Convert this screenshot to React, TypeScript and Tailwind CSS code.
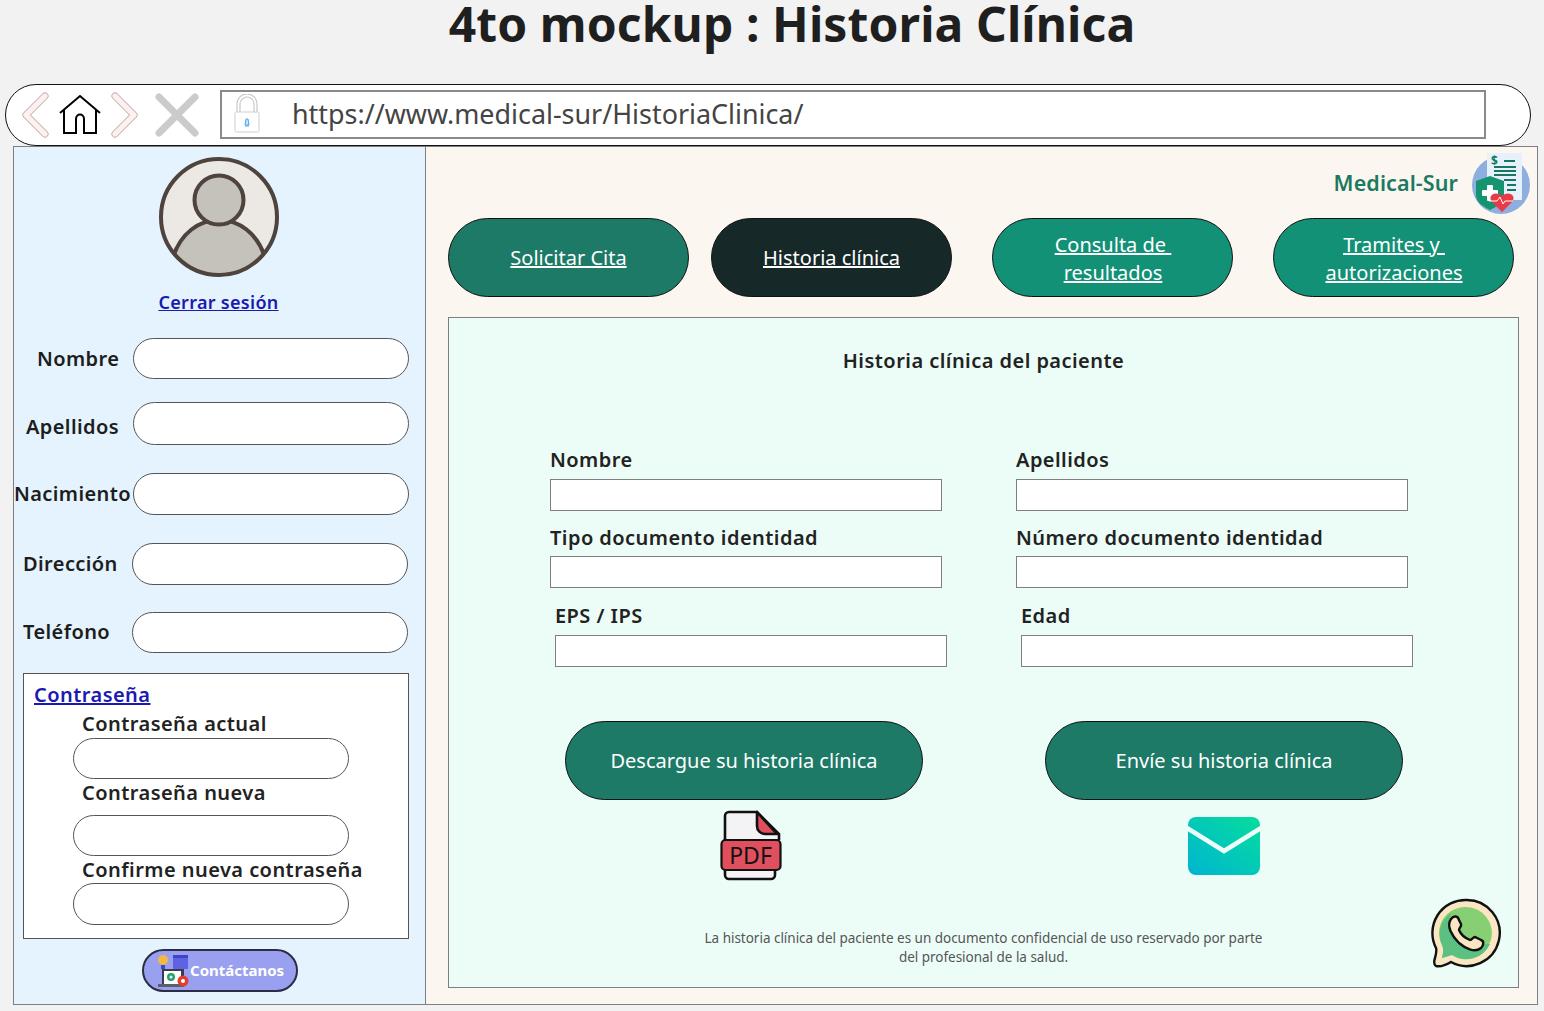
import type { ReactNode } from "react";

const font = { fontFamily: '"Noto Sans", "Open Sans", sans-serif' };

function Pill({ className = "" }: { className?: string }) {
  return <div className={`rounded-full border border-[#555] bg-white ${className}`} />;
}

function Field({ label, labelClass, inputClass }: { label: string; labelClass: string; inputClass: string }) {
  return (
    <div className="flex items-center">
      <span className={`text-[20px] leading-none font-semibold tracking-[0.4px] text-[#1d1d1d] whitespace-nowrap ${labelClass}`}>{label}</span>
      <Pill className={inputClass} />
    </div>
  );
}

function NavButton({ children, color }: { children: ReactNode; color: string }) {
  return (
    <a className={`flex h-[79px] w-[241px] items-center justify-center rounded-[40px] border border-[#111] text-center text-[20px] leading-[28px] whitespace-pre text-white underline ${color}`}>
      <span>{children}</span>
    </a>
  );
}

function FormField({ label, gap = "mt-[6px]" }: { label: string; gap?: string }) {
  return (
    <div className="w-[392px]">
      <div className="h-[24px] text-[20px] leading-[24px] font-semibold tracking-[0.45px] text-[#222]">{label}</div>
      <div className={`h-[32px] border border-[#7f7f7f] bg-white ${gap}`} />
    </div>
  );
}

function Avatar() {
  return (
    <svg width="120" height="120" viewBox="0 0 120 120">
      <defs>
        <clipPath id="c"><circle cx="60" cy="60" r="57" /></clipPath>
      </defs>
      <circle cx="60" cy="60" r="58" fill="#ece9e4" />
      <g clipPath="url(#c)">
        <path d="M14 100C22 76 40 63 60 63s38 13 46 37v22H14z" fill="#c5c1bb" stroke="#4e433d" strokeWidth="4" />
      </g>
      <circle cx="60" cy="43" r="24.5" fill="#c5c1bb" stroke="#4e433d" strokeWidth="4" />
      <circle cx="60" cy="60" r="58" fill="none" stroke="#4e433d" strokeWidth="4" />
    </svg>
  );
}

function BrowserIcons() {
  return (
    <div className="flex items-center">
      <svg width="32" height="46" viewBox="0 0 32 46" className="ml-[12px]">
        <path d="M27 4 8 23l19 19" fill="none" stroke="#b9a7a3" strokeWidth="7" strokeLinecap="round" strokeLinejoin="round" />
        <path d="M27 4 8 23l19 19" fill="none" stroke="#fdf1ef" strokeWidth="5.4" strokeLinecap="round" strokeLinejoin="round" />
      </svg>
      <svg width="44" height="42" viewBox="0 0 44 42" className="ml-[8px]" fill="none" stroke="#000" strokeWidth="2">
        <path d="M2 19 22 2l20 17" />
        <path d="M6 16v23h12V25c0-6 8-6 8 0v14h12V16" />
      </svg>
      <svg width="32" height="46" viewBox="0 0 32 46" className="ml-[8px]">
        <path d="M5 4l19 19L5 42" fill="none" stroke="#b9a7a3" strokeWidth="7" strokeLinecap="round" strokeLinejoin="round" />
        <path d="M5 4l19 19L5 42" fill="none" stroke="#fdf1ef" strokeWidth="5.4" strokeLinecap="round" strokeLinejoin="round" />
      </svg>
      <svg width="44" height="44" viewBox="0 0 44 44" className="ml-[13px]">
        <path d="M4 4l36 36M40 4 4 40" stroke="#cbcbcb" strokeWidth="7" strokeLinecap="round" />
      </svg>
    </div>
  );
}

function Lock() {
  return (
    <svg width="28" height="40" viewBox="0 0 28 40">
      <path d="M4 18V10a10 10 0 0 1 20 0v8M7 18v-8a7 7 0 0 1 14 0v8" fill="none" stroke="#c9c9c9" strokeWidth="1.2" />
      <rect x="2" y="18" width="24" height="20" rx="1.5" fill="#fff" stroke="#cfcfcf" />
      <path d="M13 25h2l1 6h-4zM12 32h4" fill="#cfe7fa" stroke="#45a5ec" strokeWidth="1" />
    </svg>
  );
}

function MedicalLogo() {
  return (
    <svg width="60" height="62" viewBox="0 0 60 62">
      <circle cx="30" cy="33" r="29" fill="#8eaee0" />
      <rect x="16" y="1" width="35" height="47" fill="#e6f1fb" />
      <path d="M33 9h11M23 15h22M23 19h22M23 23h22M33 28h12M36 33h9M36 38h9" stroke="#17785f" strokeWidth="2" />
      <text x="20" y="13" fontSize="12" fontWeight="700" fill="#17785f" style={font}>$</text>
      <path d="M19 24 33 29v14c0 7-6 11-14 15C11 54 5 50 5 43V29z" fill="#14956f" />
      <rect x="16" y="33" width="6" height="16" rx="1" fill="#fff" />
      <rect x="11" y="38" width="16" height="6" rx="1" fill="#fff" />
      <path d="M31 60 21 50c-5-6 3-12 10-6 7-6 15 0 10 6z" fill="#e93a45" />
      <path d="M18 49h8l3-4 3 7 2-3h8" fill="none" stroke="#fff" strokeWidth="1" />
    </svg>
  );
}

function ContactIcon() {
  return (
    <svg width="36" height="36" viewBox="0 0 36 36">
      <circle cx="7" cy="7" r="5" fill="#f4b942" />
      <rect x="5" y="12" width="4" height="4" fill="#3d46c8" />
      <rect x="17" y="2" width="15" height="14" rx="1" fill="#5e63e6" />
      <path d="M17 2h15v3H17z" fill="#3d46c8" />
      <rect x="6" y="16" width="22" height="16" fill="#3b3b4d" />
      <rect x="8" y="18" width="17" height="13" fill="#fff" />
      <rect x="2" y="31" width="26" height="3" fill="#5b6064" />
      <circle cx="15" cy="24" r="4" fill="#26a269" />
      <circle cx="15" cy="24" r="1.5" fill="#fff" />
      <circle cx="27" cy="28" r="5.5" fill="#e0402f" />
      <circle cx="27" cy="28" r="2" fill="#fff" />
    </svg>
  );
}

function PdfIcon() {
  return (
    <svg width="62" height="72" viewBox="0 0 62 72">
      <path d="M5 30V6a4 4 0 0 1 4-4h28l22 22v6M5 56v9a4 4 0 0 0 4 4h42a4 4 0 0 0 4-4v-9" fill="#f3f3f6" stroke="#111" strokeWidth="2.6" />
      <path d="M37 2v14a8 8 0 0 0 8 8h12z" fill="#df4f5e" stroke="#111" strokeWidth="2.6" strokeLinejoin="round" />
      <rect x="1.5" y="30" width="59" height="30" rx="4" fill="#df4f5e" stroke="#111" strokeWidth="2.2" />
      <text x="30.5" y="53.5" textAnchor="middle" fontSize="23" fill="#111" style={font}>PDF</text>
    </svg>
  );
}

function MailIcon() {
  return (
    <svg width="74" height="60" viewBox="0 0 74 60">
      <defs>
        <linearGradient id="m" x1="0" y1="1" x2="1" y2="0">
          <stop offset="0" stopColor="#00b5d1" />
          <stop offset="1" stopColor="#05dd9c" />
        </linearGradient>
      </defs>
      <rect x="1" y="1" width="72" height="58" rx="8" fill="url(#m)" />
      <path d="M0 12 37 35 74 12" fill="none" stroke="#edfdf8" strokeWidth="4.5" />
    </svg>
  );
}

function WhatsappIcon() {
  return (
    <svg width="72" height="72" viewBox="0 0 72 72">
      <path d="M36 2a33 33 0 1 1-15 62c-5 3-11 5-15 4-3-2-2-5-1-8 1-4 2-7 1-10A33 33 0 0 1 36 2z" fill="#fbe6c3" stroke="#111" strokeWidth="2.4" />
      <path d="M36 9a26 26 0 1 1-14 48l-10 3c1-5 2-9 0-13A26 26 0 0 1 36 9z" fill="#86cf72" />
      <path d="M12 47A26 26 0 0 1 21 15c-6 14 3 33 39 31a26 26 0 0 1-38 11l-10 3c1-5 2-9 0-13z" fill="#5cc080" />
      <path d="M21 21c3-4 7-3 8 1l2 4c1 2-2 4-2 6 2 5 6 8 11 10 2 0 3-3 5-3l6 3c3 1 3 5 0 8-6 5-15 1-22-5-7-7-13-17-8-24z" fill="#fbe6c3" stroke="#111" strokeWidth="2.4" />
    </svg>
  );
}

export default function App() {
  return (
    <div className="relative h-[1011px] w-[1544px] overflow-hidden bg-[#f2f2f2]" style={font}>
      <h1 className="h-[84px] pl-[40px] text-center text-[48px] leading-[47px] font-bold tracking-[0.1px] text-[#1f1f1f]">4to mockup : Historia Clínica</h1>

      <div className="ml-[5px] flex h-[62px] w-[1526px] items-center rounded-[32px] border border-[#111] bg-white">
        <BrowserIcons />
        <div className="mb-[2px] ml-[21px] flex h-[49px] w-[1266px] items-center border-2 border-[#8a8a8a] pl-[11px]">
          <Lock />
          <span className="ml-[31px] text-[26.9px] leading-none text-[#444]">https://www.medical-sur/HistoriaClinica/</span>
        </div>
      </div>

      <div className="ml-[13px] flex h-[859px] w-[1525px] border border-[#7f7f7f] bg-[#fbf6ef]">
        <aside className="flex h-full w-[412px] shrink-0 flex-col border-r border-[#7f7f7f] bg-[#e4f3fd]">
          <div className="mt-[10px] flex justify-center pr-[2px]"><Avatar /></div>
          <a className="mt-[12px] pr-[2px] text-center text-[18px] leading-[26px] font-semibold tracking-[0.3px] text-[#1a1ab0] underline">Cerrar sesión</a>

          <div className="mt-[23px]"><Field label="Nombre" labelClass="w-[119px] pl-[23px]" inputClass="h-[41px] w-[276px]" /></div>
          <div className="mt-[23px]"><Field label="Apellidos" labelClass="mt-[6px] w-[119px] pl-[12px]" inputClass="h-[43px] w-[276px]" /></div>
          <div className="mt-[28px]"><Field label="Nacimiento" labelClass="w-[119px]" inputClass="h-[42px] w-[276px]" /></div>
          <div className="mt-[28px]"><Field label="Dirección" labelClass="w-[118px] pl-[9px]" inputClass="h-[42px] w-[276px]" /></div>
          <div className="mt-[27px]"><Field label="Teléfono" labelClass="mb-[2px] w-[118px] pl-[9px]" inputClass="h-[41px] w-[276px]" /></div>

          <div className="mt-[20px] ml-[9px] flex h-[266px] w-[386px] flex-col border border-[#555] bg-white pl-[10px] tracking-[0.45px]">
            <a className="mt-[7px] text-[20px] leading-[28px] font-semibold text-[#1a1ab0] underline">Contraseña</a>
            <div className="mt-[1px] ml-[48px] h-[28px] text-[20px] leading-[27px] font-semibold text-[#222]">Contraseña actual</div>
            <Pill className="ml-[39px] h-[41px] w-[276px]" />
            <div className="ml-[48px] h-[27px] text-[20px] leading-[27px] font-semibold text-[#222]">Contraseña nueva</div>
            <Pill className="mt-[9px] ml-[39px] h-[41px] w-[276px]" />
            <div className="ml-[48px] h-[27px] text-[20px] leading-[27px] font-semibold whitespace-nowrap text-[#222]">Confirme nueva contraseña</div>
            <Pill className="ml-[39px] h-[42px] w-[276px]" />
          </div>

          <div className="mt-[10px] ml-[128px] flex h-[43px] w-[156px] items-center rounded-full border-2 border-[#2c2c44] bg-[#9aa0f0] pl-[12px]">
            <ContactIcon />
            <span className="-ml-[2px] text-[15px] font-bold text-white">Contáctanos</span>
          </div>
        </aside>

        <main className="flex min-w-0 flex-1 flex-col pl-[22px]">
          <div className="flex h-[71px] items-center justify-end pr-[6px]">
            <span className="mt-[1px] mr-[13px] text-[21.5px] leading-none font-semibold tracking-[0.1px] text-[#1b7a62]">Medical-Sur</span>
            <MedicalLogo />
          </div>

          <div className="flex gap-[22px]">
            <NavButton color="bg-[#1c7a66]">Solicitar Cita</NavButton>
            <NavButton color="bg-[#162928]">Historia clínica</NavButton>
            <div className="ml-[18px]"><NavButton color="bg-[#139177] pt-[2px] pl-[1px]">Consulta de <br />resultados</NavButton></div>
            <div className="ml-[18px]"><NavButton color="bg-[#139177] pt-[2px] pl-[1px]">Tramites y <br />autorizaciones</NavButton></div>
          </div>

          <section className="relative mt-[20px] flex h-[671px] w-[1071px] flex-col border border-[#7f7f7f] bg-[#ecfdf8]">
            <h2 className="mt-[29px] h-[28px] text-center text-[20px] leading-[28px] font-semibold tracking-[0.45px] text-[#222]">Historia clínica del paciente</h2>

            <div className="mt-[73px] flex flex-col">
              <div className="ml-[101px] flex gap-[74px]">
                <FormField label="Nombre" gap="mt-[7px]" />
                <FormField label="Apellidos" gap="mt-[7px]" />
              </div>
              <div className="mt-[15px] ml-[101px] flex gap-[74px]">
                <FormField label="Tipo documento identidad" />
                <FormField label="Número documento identidad" />
              </div>
              <div className="mt-[16px] ml-[106px] flex gap-[74px]">
                <FormField label="EPS / IPS" gap="mt-[7px]" />
                <FormField label="Edad" gap="mt-[7px]" />
              </div>
            </div>

            <div className="mt-[54px] ml-[116px] flex gap-[122px]">
              <div className="flex w-[358px] flex-col items-center">
                <a className="flex h-[79px] w-full items-center justify-center rounded-[40px] border border-[#111] bg-[#1c7a66] text-[20px] text-white">Descargue su historia clínica</a>
                <div className="mt-[10px] mr-[-14px]"><PdfIcon /></div>
              </div>
              <div className="flex w-[358px] flex-col items-center">
                <a className="flex h-[79px] w-full items-center justify-center rounded-[40px] border border-[#111] bg-[#1c7a66] text-[20px] text-white">Envíe su historia clínica</a>
                <div className="mt-[16px]"><MailIcon /></div>
              </div>
            </div>

            <p className="absolute top-[611px] left-0 w-full text-center text-[13.5px] leading-[19px] tracking-[-0.02px] text-[#555]">
              La historia clínica del paciente es un documento confidencial de uso reservado por parte
              <br />
              del profesional de la salud.
            </p>

            <div className="absolute top-[580px] left-[981px]"><WhatsappIcon /></div>
          </section>
        </main>
      </div>
    </div>
  );
}
